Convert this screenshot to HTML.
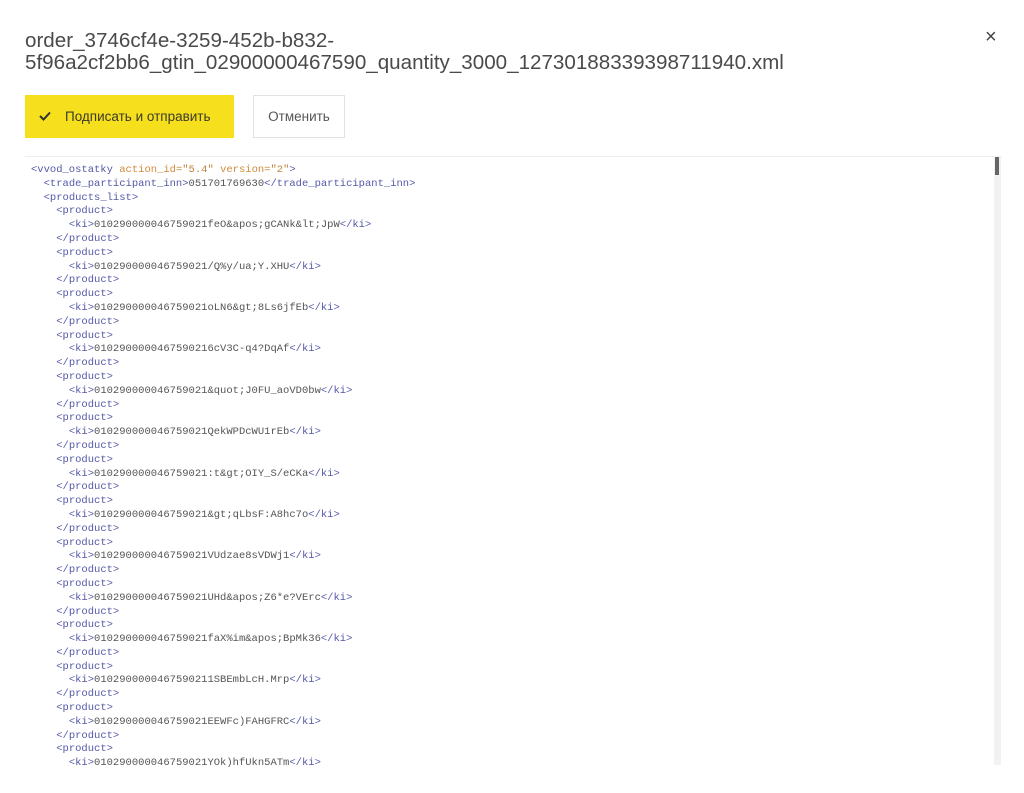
<!DOCTYPE html>
<html><head><meta charset="utf-8"><style>
body{margin:0;background:#fff;width:1024px;height:793px;overflow:hidden;font-family:"Liberation Sans",sans-serif;position:relative}
.t{position:absolute;left:25px;top:30px;font-size:20.6px;line-height:22px;color:#4a4a4a;width:900px}
.x{position:absolute;left:985px;top:26px;font-size:20px;color:#444}
.b1{position:absolute;left:25px;top:95px;width:209px;height:43px;background:#f6e01e;color:#3a3a2a;font-size:13.5px;line-height:43px;box-sizing:border-box;padding-left:40px}
.b1 svg{position:absolute;left:14px;top:16px}
.b2{position:absolute;left:253px;top:95px;width:92px;height:43px;border:1px solid #e2e2e2;box-sizing:border-box;color:#555;font-size:13.5px;line-height:41px;text-align:center}
.box{position:absolute;left:25px;top:156px;width:977px;height:612px;border-top:1px solid #eee}
.sb{position:absolute;left:994px;top:157px;width:7px;height:608px;background:#f2f2f2}
.th{position:absolute;left:995px;top:157px;width:4px;height:18px;background:#666}
pre{position:absolute;left:31px;top:164px;margin:0;font-family:"Liberation Mono",monospace;font-size:10.5px;line-height:13.8px;color:#555}
.g{color:#5558a8}.a{color:#d08a3a}.v{color:#c0823a}
</style></head><body>
<div class="t">order_3746cf4e-3259-452b-b832-<br>5f96a2cf2bb6_gtin_02900000467590_quantity_3000_12730188339398711940.xml</div>
<div class="x">×</div>
<div class="b1"><svg width="12" height="10" viewBox="0 0 12 10"><path d="M1 5l3.5 3.5L11 1.5" stroke="#333" stroke-width="2" fill="none"/></svg>Подписать и отправить</div>
<div class="b2">Отменить</div>
<div class="box"></div>
<div class="sb"></div><div class="th"></div>
<pre><span class="g">&lt;vvod_ostatky</span> <span class="a">action_id=</span><span class="v">"5.4"</span> <span class="a">version=</span><span class="v">"2"</span><span class="g">&gt;</span>
  <span class="g">&lt;trade_participant_inn&gt;</span>051701769630<span class="g">&lt;/trade_participant_inn&gt;</span>
  <span class="g">&lt;products_list&gt;</span>
    <span class="g">&lt;product&gt;</span>
      <span class="g">&lt;ki&gt;</span>010290000046759021feO&amp;apos;gCANk&amp;lt;JpW<span class="g">&lt;/ki&gt;</span>
    <span class="g">&lt;/product&gt;</span>
    <span class="g">&lt;product&gt;</span>
      <span class="g">&lt;ki&gt;</span>010290000046759021/Q%y/ua;Y.XHU<span class="g">&lt;/ki&gt;</span>
    <span class="g">&lt;/product&gt;</span>
    <span class="g">&lt;product&gt;</span>
      <span class="g">&lt;ki&gt;</span>010290000046759021oLN6&amp;gt;8Ls6jfEb<span class="g">&lt;/ki&gt;</span>
    <span class="g">&lt;/product&gt;</span>
    <span class="g">&lt;product&gt;</span>
      <span class="g">&lt;ki&gt;</span>0102900000467590216cV3C-q4?DqAf<span class="g">&lt;/ki&gt;</span>
    <span class="g">&lt;/product&gt;</span>
    <span class="g">&lt;product&gt;</span>
      <span class="g">&lt;ki&gt;</span>010290000046759021&amp;quot;J0FU_aoVD0bw<span class="g">&lt;/ki&gt;</span>
    <span class="g">&lt;/product&gt;</span>
    <span class="g">&lt;product&gt;</span>
      <span class="g">&lt;ki&gt;</span>010290000046759021QekWPDcWU1rEb<span class="g">&lt;/ki&gt;</span>
    <span class="g">&lt;/product&gt;</span>
    <span class="g">&lt;product&gt;</span>
      <span class="g">&lt;ki&gt;</span>010290000046759021:t&amp;gt;OIY_S/eCKa<span class="g">&lt;/ki&gt;</span>
    <span class="g">&lt;/product&gt;</span>
    <span class="g">&lt;product&gt;</span>
      <span class="g">&lt;ki&gt;</span>010290000046759021&amp;gt;qLbsF:A8hc7o<span class="g">&lt;/ki&gt;</span>
    <span class="g">&lt;/product&gt;</span>
    <span class="g">&lt;product&gt;</span>
      <span class="g">&lt;ki&gt;</span>010290000046759021VUdzae8sVDWj1<span class="g">&lt;/ki&gt;</span>
    <span class="g">&lt;/product&gt;</span>
    <span class="g">&lt;product&gt;</span>
      <span class="g">&lt;ki&gt;</span>010290000046759021UHd&amp;apos;Z6*e?VErc<span class="g">&lt;/ki&gt;</span>
    <span class="g">&lt;/product&gt;</span>
    <span class="g">&lt;product&gt;</span>
      <span class="g">&lt;ki&gt;</span>010290000046759021faX%im&amp;apos;BpMk36<span class="g">&lt;/ki&gt;</span>
    <span class="g">&lt;/product&gt;</span>
    <span class="g">&lt;product&gt;</span>
      <span class="g">&lt;ki&gt;</span>0102900000467590211SBEmbLcH.Mrp<span class="g">&lt;/ki&gt;</span>
    <span class="g">&lt;/product&gt;</span>
    <span class="g">&lt;product&gt;</span>
      <span class="g">&lt;ki&gt;</span>010290000046759021EEWFc)FAHGFRC<span class="g">&lt;/ki&gt;</span>
    <span class="g">&lt;/product&gt;</span>
    <span class="g">&lt;product&gt;</span>
      <span class="g">&lt;ki&gt;</span>010290000046759021YOk)hfUkn5ATm<span class="g">&lt;/ki&gt;</span></pre>
<div style="position:absolute;left:25px;top:767px;width:970px;height:26px;background:#fff"></div>
</body></html>
